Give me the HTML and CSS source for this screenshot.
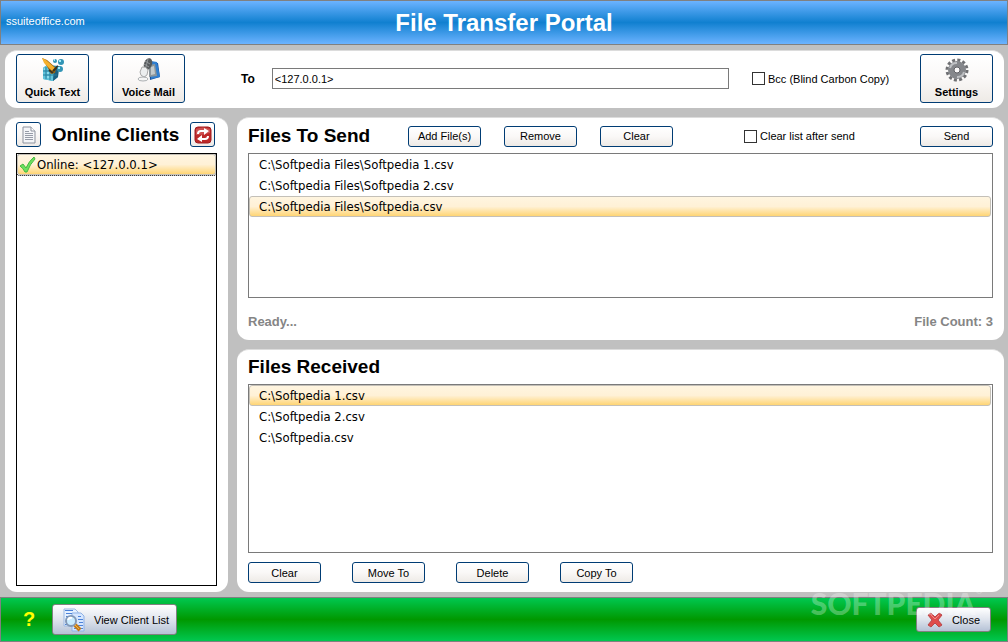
FILE: index.html
```html
<!DOCTYPE html>
<html lang="en">
<head>
    <meta charset="UTF-8">
    <meta name="viewport" content="width=device-width, initial-scale=1.0">
    <title>File Transfer Portal</title>
    <link rel="stylesheet" href="styles.css">
</head>
<body>

    <header class="titlebar">
        <a class="site" href="#">ssuiteoffice.com</a>
        <h1>File Transfer Portal</h1>
    </header>

    <main>
        <!-- Toolbar -->
        <section class="panel toolbar">
            <button class="btn big" type="button">
                <svg width="24" height="24" viewBox="0 0 24 24">
                    <path d="M2 10l4-3 12 1-1 11-5 4-10-2z" fill="#2a93b4"/>
                    <path d="M2 10l4-3 7 2-1 14-10-2z" fill="#62c4dc"/>
                    <path d="M12 23l5-4 1-11-5 3z" fill="#1c5f80"/>
                    <path d="M5 9v12M9 9v13M2 13h10M2 17h14" stroke="#277f9d" fill="none"/>
                    <path d="M3 11h1M6 15h2M6 19h2M10 15h1" stroke="#b4f1fa" fill="none"/>
                    <path d="M1 0l5 2 9 8-1 5-4 1-2-4z" fill="#9a6410"/>
                    <path d="M1 0l4 2 9 8-3 3-8-8z" fill="#f5b02c"/>
                    <path d="M12 13l5-5M8 12l4 3" stroke="#3c3420" stroke-width="2"/>
                    <circle cx="14" cy="3" r="2" fill="#3194b5"/>
                    <circle cx="20" cy="4" r="3" fill="#3194b5"/>
                    <circle cx="19" cy="11" r="3" fill="#3194b5"/>
                    <path d="M13 2h1M18 3h2M17 10h2" stroke="#a5ecf8" stroke-width="2"/>
                </svg>
                Quick Text
            </button>
            <button class="btn big" type="button">
                <svg width="24" height="24" viewBox="0 0 24 24">
                    <path d="M12 5h9l2 14-10 3z" fill="#174f9c"/>
                    <path d="M14 3l6 1 3 15-9 2z" fill="#2f7ed0"/>
                    <path d="M12 7l6-1 2 12-8 1z" fill="#8c969c"/>
                    <path d="M14 9l3-1 1 8-4 1z" fill="#c4cacc"/>
                    <ellipse cx="11" cy="6" rx="4" ry="6" fill="#55595c" transform="rotate(20 11 6)"/>
                    <path d="M8 3l5 3M7 6l5 3M11 1l-2 8" stroke="#93979a" fill="none"/>
                    <path d="M5 9q4-1 6 3l-1 5-3 2q-4-1-4-5z" fill="#eceeef" stroke="#aaa"/>
                    <path d="M7 18v3" stroke="#b0b3b5" stroke-width="3"/>
                    <ellipse cx="6" cy="21" rx="5" ry="2" fill="#f5f5f5" stroke="#adb0b2"/>
                </svg>
                Voice Mail
            </button>
            <label class="to" for="to">To</label>
            <input class="address" type="text" id="to" value="&lt;127.0.0.1&gt;">
            <label class="check bcc"><input type="checkbox"> Bcc (Blind Carbon Copy)</label>
            <button class="btn big" type="button">
                <svg width="24" height="24" viewBox="0 0 24 24">
                    <circle cx="12" cy="12" r="10" fill="none" stroke="#707174" stroke-width="3" stroke-dasharray="3 2.236"/>
                    <circle cx="12" cy="12" r="6" fill="none" stroke="#85878b" stroke-width="6"/>
                    <path d="M5 10a7 7 0 0 1 7-5M19 14a7 7 0 0 1-7 5" stroke="#bfc1c4" stroke-width="2" fill="none"/>
                    <circle cx="12" cy="12" r="3" fill="#fbfafa" stroke="#606165"/>
                </svg>
                Settings
            </button>
        </section>

        <!-- Online clients -->
        <section class="panel clients">
            <div class="clients-head">
                <button class="btn square" type="button" aria-label="Client log">
                    <svg width="16" height="18" viewBox="0 0 16 18">
                        <path d="M2 1h8l4 4v12H2z" fill="#f4f5f8" stroke="#8d929d"/>
                        <path d="M10 1v4h4" fill="#fff" stroke="#8d929d"/>
                        <path d="M4 5.500h4M4 7.500h8M4 9.500h8M4 11.500h8M4 13.500h8" stroke="#979ca8"/>
                    </svg>
                </button>
                <h2>Online Clients</h2>
                <button class="btn square" type="button" aria-label="Refresh">
                    <svg width="18" height="18" viewBox="0 0 18 18">
                        <rect x="1" y="1" width="16" height="16" rx="3" fill="#bd2929" stroke="#a01d20"/>
                        <path d="M2 3q7-3 14 0v4q-7 2-14 2z" fill="#cd5050"/>
                        <path d="M4 8q0-3 3-3h4M14 10q0 3-3 3H7" fill="none" stroke="#fff" stroke-width="2"/>
                        <path d="M10 2l5 3-5 4zM8 9l-5 4 5 3z" fill="#fff"/>
                    </svg>
                </button>
            </div>
            <ul class="list client-list">
                <li class="selected">
                    <svg width="17" height="17" viewBox="0 0 17 17">
                        <path d="M1 10l3-2 3 4Q10 5 15 1l1 2Q11 8 8 16H6Q4 12 1 10z" fill="#6be05f" stroke="#45b83f"/>
                    </svg>
                    Online: &lt;127.0.0.1&gt;
                </li>
            </ul>
        </section>

        <!-- Files to send -->
        <section class="panel send">
            <div class="send-head">
                <h2>Files To Send</h2>
                <button class="btn" type="button">Add File(s)</button>
                <button class="btn" type="button">Remove</button>
                <button class="btn" type="button">Clear</button>
                <label class="check after-send"><input type="checkbox"> Clear list after send</label>
                <button class="btn last" type="button">Send</button>
            </div>
            <ul class="list">
                <li>C:\Softpedia Files\Softpedia 1.csv</li>
                <li>C:\Softpedia Files\Softpedia 2.csv</li>
                <li class="selected">C:\Softpedia Files\Softpedia.csv</li>
            </ul>
            <div class="status">
                <span>Ready...</span>
                <span>File Count: 3</span>
            </div>
        </section>

        <!-- Files received -->
        <section class="panel received">
            <h2>Files Received</h2>
            <ul class="list">
                <li class="selected">C:\Softpedia 1.csv</li>
                <li>C:\Softpedia 2.csv</li>
                <li>C:\Softpedia.csv</li>
            </ul>
            <div class="actions">
                <button class="btn" type="button">Clear</button>
                <button class="btn" type="button">Move To</button>
                <button class="btn" type="button">Delete</button>
                <button class="btn" type="button">Copy To</button>
            </div>
        </section>
    </main>

    <footer class="bottombar">
        <a class="help" href="#">?</a>
        <button class="silver" type="button">
            <svg width="24" height="24" viewBox="0 0 24 24">
                <path d="M2 1h11l3 3v14H2z" fill="#e6f1ff" stroke="#9db9e2"/>
                <path d="M10 5h9l3 3v15H10z" fill="#d5e6ff" stroke="#8fb1e5"/>
                <path d="M3 2.500h8M4 5.500h6M4 8.500h4M3 16.500h5M16 8.500h3M16 11.500h5M17 14.500h4M16 17.500h5M12 20.500h9" stroke="#4e83d8"/>
                <circle cx="9" cy="13" r="5" fill="#c9ebff" stroke="#8298b6" stroke-width="2"/>
                <path d="M6 12q1-3 4-2" stroke="#fff" stroke-width="2" fill="none"/>
                <path d="M13 17l5 5" stroke="#c37a19" stroke-width="4"/>
                <path d="M13 17l4 4" stroke="#f0b645"/>
            </svg>
            View Client List
        </button>
        <button class="silver close" type="button">
            <svg width="18" height="18" viewBox="0 0 18 18">
                <path d="M5 2l4 4 4-4 3 2-4 5 4 5-3 2-4-4-4 4-3-2 4-5-4-5z" fill="#e04b4b" stroke="#b9494c"/>
                <path d="M5 4l4 4 4-4" fill="none" stroke="#f08a86"/>
            </svg>
            Close
        </button>
        <div class="watermark">SOFTPEDIA<sup>®</sup></div>
    </footer>

</body>
</html>
```
FILE: styles.css
```css
* {
    box-sizing: border-box;
}

body {
    margin: 0;
    min-height: 100vh;
    display: flex;
    flex-direction: column;
    background: #c0c0c0;
    color: #000;
    font-family: "Liberation Sans", Arial, sans-serif;
    font-size: 11px;
}

h1, h2 {
    margin: 0;
    font-weight: bold;
    white-space: nowrap;
}

h2 {
    font-size: 19px;
    line-height: 24px;
}

svg {
    display: block;
    flex: none;
}

button, input {
    font: inherit;
    color: inherit;
}

/* Title bar */
.titlebar {
    display: grid;
    grid-template-columns: 1fr auto 1fr;
    align-items: center;
    height: 45px;
    padding: 0 5px;
    border: 1px solid #808080;
    background: linear-gradient(#6cb3ff, #1080d0 50%, #6cb3ff);
    color: #fff;
}

.titlebar h1 {
    font-size: 24px;
    line-height: 28px;
}

.site {
    margin-bottom: 4px;
    color: #fff;
    text-decoration: none;
}

/* Panels */
main {
    flex: 1;
    display: grid;
    grid-template-columns: 223px minmax(0, 1fr);
    grid-template-rows: auto auto 1fr;
    gap: 9px;
    padding: 5px 4px 5px 5px;
}

.panel {
    display: flex;
    flex-direction: column;
    padding: 6px 11px;
    border-top: 1px solid #dcdcdc;
    border-radius: 12px;
    background: #fff;
}

.toolbar {
    grid-column: 1 / 3;
    flex-direction: row;
    align-items: center;
    gap: 23px;
    padding: 3px 11px 5px;
}

.clients {
    grid-row: 2 / 4;
    padding-top: 4px;
}

/* Buttons */
.btn {
    flex: none;
    width: 73px;
    height: 21px;
    padding: 0;
    border: 1px solid #003c74;
    border-radius: 3px;
    background: linear-gradient(#fff, #faf8f7 50%, #eeeae6);
}

.btn.big {
    display: flex;
    flex-direction: column;
    align-items: center;
    gap: 2px;
    height: 49px;
    padding-top: 3px;
    font-weight: bold;
    line-height: 16px;
}

.btn.square {
    display: flex;
    align-items: center;
    justify-content: center;
    width: 25px;
    height: 25px;
}

.to {
    margin-left: 33px;
    margin-right: -6px;
    font-size: 12px;
    font-weight: bold;
}

.address {
    flex: 1;
    min-width: 0;
    height: 21px;
    padding: 0 2px;
    border: 1px solid #7a7a7a;
    background: #fff;
}

.check {
    display: flex;
    align-items: center;
    gap: 3px;
    white-space: nowrap;
}

.check input {
    appearance: none;
    width: 13px;
    height: 13px;
    margin: 0;
    border: 1px solid #333;
    background: #fff;
}

.check input:checked {
    background: #003c74;
}

.bcc {
    width: 145px;
}

/* Lists */
.list {
    margin: 0;
    padding: 0 1px 0 0;
    list-style: none;
    border: 1px solid #7a7a7a;
    background: #fff;
    font-family: "DejaVu Sans Condensed", Tahoma, sans-serif;
    font-size: 13px;
}

.list li {
    height: 21px;
    padding: 0 9px;
    border: 1px solid transparent;
    line-height: 20px;
    white-space: nowrap;
}

.list .selected {
    border-color: #c4c0b8;
    border-radius: 3px;
    background: linear-gradient(#fff5e0, #fff1d6 50%, #ffd574);
}

.clients-head {
    display: flex;
    align-items: center;
    justify-content: space-between;
    margin-bottom: 6px;
    padding-right: 2px;
}

.client-list {
    flex: 1;
    padding: 0;
    border-color: #000;
}

.client-list li {
    display: flex;
    align-items: center;
    gap: 1px;
    padding: 0 1px;
}

.client-list .selected {
    outline: 1px dotted #000;
}

/* Files to send */
.send-head {
    display: flex;
    align-items: center;
    gap: 23px;
    margin-bottom: 5px;
}

.send-head h2 {
    width: 137px;
}

.after-send {
    margin-left: 48px;
}

.last {
    margin-left: auto;
}

.send .list {
    height: 145px;
}

.status {
    display: flex;
    justify-content: space-between;
    padding: 16px 0 4px;
    color: #858585;
    font-size: 13px;
    font-weight: bold;
    line-height: 16px;
}

/* Files received */
.received {
    padding-top: 5px;
}

.received h2 {
    margin-bottom: 5px;
}

.received .list {
    flex: 1;
}

.actions {
    display: flex;
    gap: 31px;
    padding: 9px 0 3px;
}

/* Bottom bar */
.bottombar {
    position: relative;
    display: flex;
    align-items: center;
    height: 45px;
    padding: 0 16px 0 22px;
    border: 1px solid #808080;
    background: linear-gradient(#00c850, #009800 50%, #00c850);
}

.help {
    width: 29px;
    color: #ff0;
    font-size: 20px;
    font-weight: bold;
    text-decoration: none;
}

.silver {
    display: flex;
    align-items: center;
    gap: 8px;
    height: 31px;
    padding: 0 7px 0 9px;
    border: 1px solid #808080;
    border-radius: 3px;
    background: linear-gradient(#fff, #dfe4ed 50%, #b5c2d6);
}

.close {
    height: 25px;
    margin-left: auto;
    padding: 0 10px 0 9px;
}

.watermark {
    position: absolute;
    right: 24px;
    bottom: 21px;
    color: rgba(255, 255, 255, 0.3);
    font-family: Lato, sans-serif;
    font-size: 30px;
    font-weight: 900;
    line-height: 34px;
    pointer-events: none;
}

.watermark sup {
    font-size: 9px;
    line-height: 9px;
    vertical-align: top;
}
```
